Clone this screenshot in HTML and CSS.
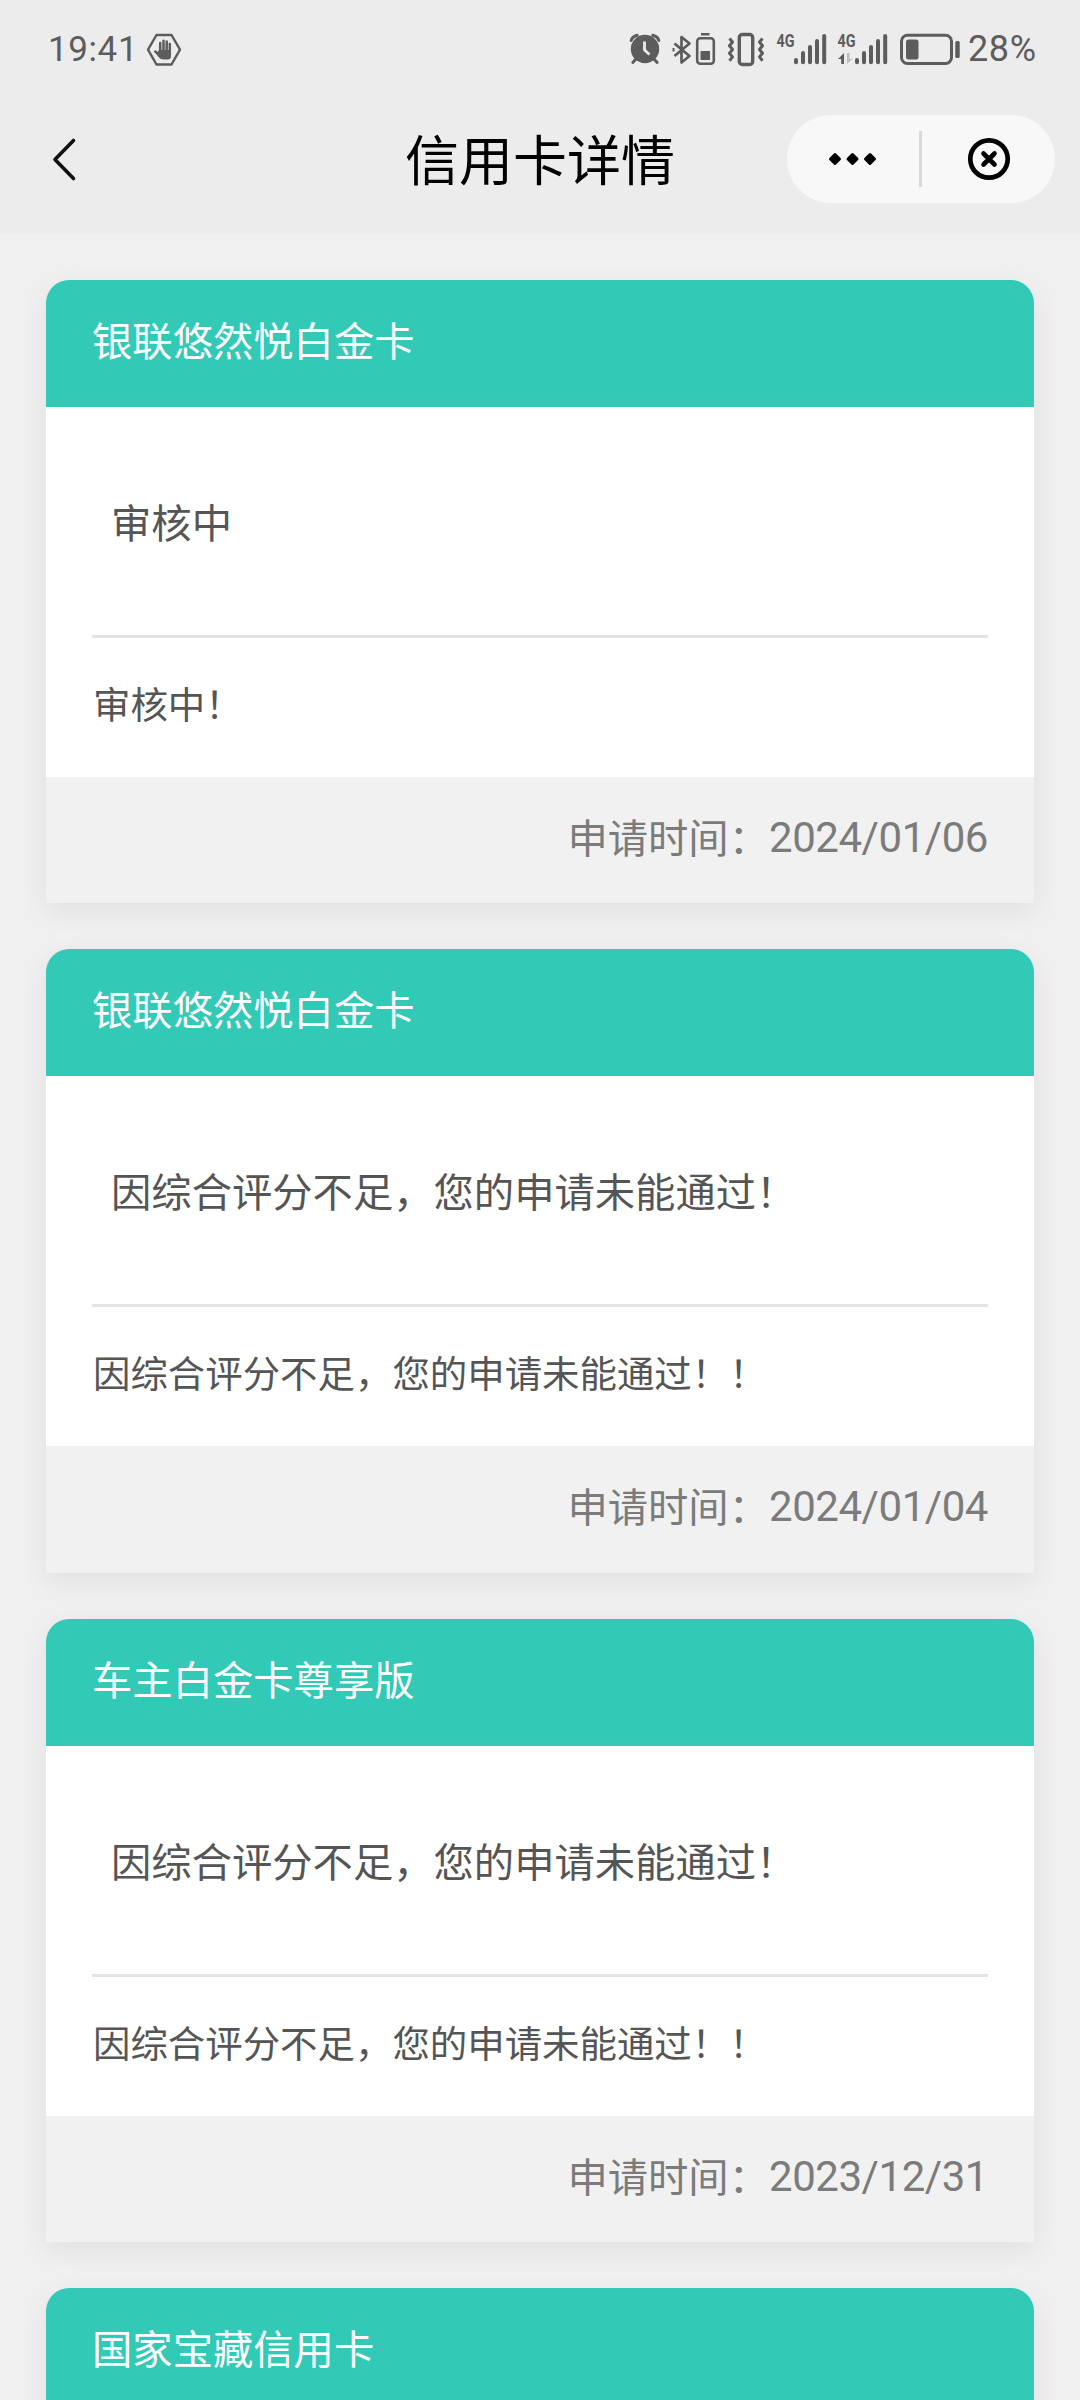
FILE: index.html
```html
<!DOCTYPE html>
<html lang="zh-CN">
<head>
<meta charset="utf-8">
<title>信用卡详情</title>
<link rel="stylesheet" href="styles.css">
</head>
<body>
<div class="screen">
  <header class="top">
    <div class="status">
      <span class="clock">19:41</span>
      <svg class="hand" width="38" height="98" viewBox="145 0 38 98">
        <path d="M156.500 35h15l8.500 14.700-8.500 14.800h-15l-8.500-14.800z" fill="none" stroke="#5c5c5c" stroke-width="2.400" stroke-linejoin="round"/>
        <g stroke="#5c5c5c" stroke-width="2.500" stroke-linecap="round" fill="none"><path d="M160.200 43v11M163.500 40.800v12M166.700 41.500v11M169.800 44v10M155.300 51.500l5 4.500"/></g>
        <path d="M159 50h12v6q0 3.500-3.500 3.500h-4q-3 0-5-2.500l-2-3z" fill="#5c5c5c"/>
      </svg>
      <span class="spacer"></span>
      <svg width="43" height="98" viewBox="626 0 43 98">
        <circle cx="645" cy="49" r="14.200" fill="#5c5c5c"/>
        <path d="M631.200 40.500q1-4 6-5.200M658.800 40.500q-1-4-6-5.200" fill="none" stroke="#5c5c5c" stroke-width="3" stroke-linecap="round"/>
        <path d="M636 59l-3.200 3.500M654 59l3.200 3.500" stroke="#5c5c5c" stroke-width="3" stroke-linecap="round"/>
        <path d="M644.500 41.500v8.500l5 4.500" fill="none" stroke="#ececec" stroke-width="2.800"/>
      </svg>
      <svg width="53" height="98" viewBox="669 0 53 98">
        <path d="M674.500 43.500l15 12.500-8 6.500V37l8 6.500-15 12.500" fill="none" stroke="#5c5c5c" stroke-width="2.700" stroke-linejoin="round"/>
        <path d="M672.500 48h2v3.500h-2z" fill="#5c5c5c"/>
        <rect x="697.200" y="38.200" width="16.600" height="25.600" rx="3" fill="none" stroke="#5c5c5c" stroke-width="2.600"/>
        <path d="M701 33h8.500v2.600H701zM700.500 51h9.500v9h-9.500z" fill="#5c5c5c"/>
      </svg>
      <svg width="51" height="98" viewBox="722 0 51 98">
        <rect x="739.300" y="34.500" width="13.400" height="30" rx="3" fill="none" stroke="#5c5c5c" stroke-width="3.400"/>
        <path d="M729.500 38.500l3 3.500-3 3.800 3 3.700-3 3.700 3 3.700-3 3.800M762.500 38.500l-3 3.500 3 3.800-3 3.700 3 3.700-3 3.700 3 3.800" fill="none" stroke="#5c5c5c" stroke-width="3" stroke-linejoin="round"/>
      </svg>
      <svg width="59" height="98" viewBox="773 0 59 98">
        <text class="net" x="776.500" y="47.300" textLength="18" lengthAdjust="spacingAndGlyphs">4G</text>
        <path d="M796 60v2.300M803 53v9.300M810 47v15.300M817 41v21.300M824.200 36v26.300" stroke="#5c5c5c" stroke-width="4" stroke-linecap="round"/>
      </svg>
      <svg width="62" height="98" viewBox="832 0 62 98">
        <text class="net" x="837.500" y="47.300" textLength="18" lengthAdjust="spacingAndGlyphs">4G</text>
        <path d="M844 53v11h-2.800v-5H838z" fill="#5c5c5c"/>
        <path d="M847 53v11l5.500-5h-3v-6z" fill="#bdbdbd"/>
        <path d="M857 60v2.300M864 53v9.300M871 47v15.300M878 41v21.300M885.200 36v26.300" stroke="#5c5c5c" stroke-width="4" stroke-linecap="round"/>
      </svg>
      <svg width="74" height="98" viewBox="894 0 74 98">
        <rect x="901.500" y="35.200" width="50" height="28.300" rx="6" fill="none" stroke="#5c5c5c" stroke-width="3"/>
        <rect x="906" y="39.500" width="12.500" height="20" rx="2.500" fill="#5c5c5c"/>
        <rect x="955.300" y="41" width="4.400" height="17" rx="1.500" fill="#5c5c5c"/>
      </svg>
      <span class="percent">28%</span>
    </div>
    <nav class="nav">
      <svg class="back" width="60" height="60" viewBox="40 130 60 60"><path d="M73.500 141.500L55 160.500l18.500 19" fill="none" stroke="#111" stroke-width="3.600" stroke-linecap="round" stroke-linejoin="round"/></svg>
      <h1 class="title">信用卡详情</h1>
      <div class="capsule">
        <svg width="132" height="88" viewBox="787 115 132 88"><path d="M835 154.500l4.500 4.500-4.500 4.500-4.500-4.500zM852.500 154.500l4.500 4.500-4.500 4.500-4.500-4.500zM870 154.500l4.500 4.500-4.500 4.500-4.500-4.500z" stroke="#000" stroke-width="3" stroke-linejoin="round"/></svg>
        <span class="divider"></span>
        <svg width="132" height="88" viewBox="922 115 132 88"><circle cx="989" cy="159" r="18.700" fill="none" stroke="#000" stroke-width="4.700"/><path d="M983.500 153.500l11 11M994.500 153.500l-11 11" stroke="#000" stroke-width="4.600" stroke-linecap="round"/></svg>
      </div>
    </nav>
  </header>
  <main class="list">
    <section class="card">
      <h2 class="name">银联悠然悦白金卡</h2>
      <div class="body"><p class="state">审核中</p><p class="detail">审核中！</p></div>
      <footer class="foot"><span>申请时间：</span><span class="date">2024/01/06</span></footer>
    </section>
    <section class="card">
      <h2 class="name">银联悠然悦白金卡</h2>
      <div class="body"><p class="state">因综合评分不足，您的申请未能通过！</p><p class="detail">因综合评分不足，您的申请未能通过！！</p></div>
      <footer class="foot"><span>申请时间：</span><span class="date">2024/01/04</span></footer>
    </section>
    <section class="card">
      <h2 class="name">车主白金卡尊享版</h2>
      <div class="body"><p class="state">因综合评分不足，您的申请未能通过！</p><p class="detail">因综合评分不足，您的申请未能通过！！</p></div>
      <footer class="foot"><span>申请时间：</span><span class="date">2023/12/31</span></footer>
    </section>
    <section class="card">
      <h2 class="name">国家宝藏信用卡</h2>
      <div class="body"></div>
    </section>
  </main>
</div>
</body>
</html>
```
FILE: styles.css
```css
* { box-sizing: border-box; margin: 0; padding: 0; }
body { background: #f0f0f0; font-family: "Noto Sans CJK SC", sans-serif; }
.screen { width: 1080px; height: 2400px; overflow: hidden; }
.top { height: 234px; background: #ececec; }
.status { display: flex; height: 98px; padding-left: 48px; color: #5c5c5c; font-family: Roboto, sans-serif; line-height: 99px; }
.status svg { flex: none; }
.clock { width: 97px; font-size: 35px; letter-spacing: 0.6px; white-space: nowrap; }
.spacer { flex: 1; }
.percent { width: 112px; font-size: 36px; letter-spacing: 0.6px; }
.net { font: 700 19px Roboto, sans-serif; fill: #5c5c5c; }
.nav { display: grid; grid-template-columns: 293px 1fr 293px; align-items: center; height: 122px; }
.back { margin-left: 40px; }
.title { padding-bottom: 2px; text-align: center; font-size: 54px; font-weight: 400; line-height: 78px; color: #000; white-space: nowrap; }
.capsule { display: flex; align-items: center; width: 268px; height: 88px; border-radius: 44px; background: #f8f8f8; }
.divider { width: 3px; height: 56px; background: #d9d9d9; }
.list { display: flex; flex-direction: column; gap: 46px; padding: 46px 46px 0; }
.card { flex: none; height: 623.300px; border-radius: 23px 23px 0 0; background: #fff; box-shadow: 0 8px 28px rgba(0, 0, 0, .07); }
.name { height: 127px; padding-left: 46px; border-radius: 23px 23px 0 0; background: #32c9b7; color: #fff; font-size: 40.320px; font-weight: 400; line-height: 118px; }
.body { height: 370px; padding: 0 46px; color: #555; }
.state { height: 231px; padding-left: 19px; border-bottom: 3px solid #e3e3e3; font-size: 40.320px; line-height: 227px; }
.detail { padding-left: 1px; font-size: 37.440px; line-height: 131px; }
.foot { display: flex; justify-content: flex-end; height: 126.300px; padding-right: 46px; background: #f1f1f1; color: #7b7b7b; font-size: 40.320px; line-height: 118px; }
.date { font-family: Roboto, sans-serif; font-size: 42px; letter-spacing: -0.450px; line-height: 122px; }
```
